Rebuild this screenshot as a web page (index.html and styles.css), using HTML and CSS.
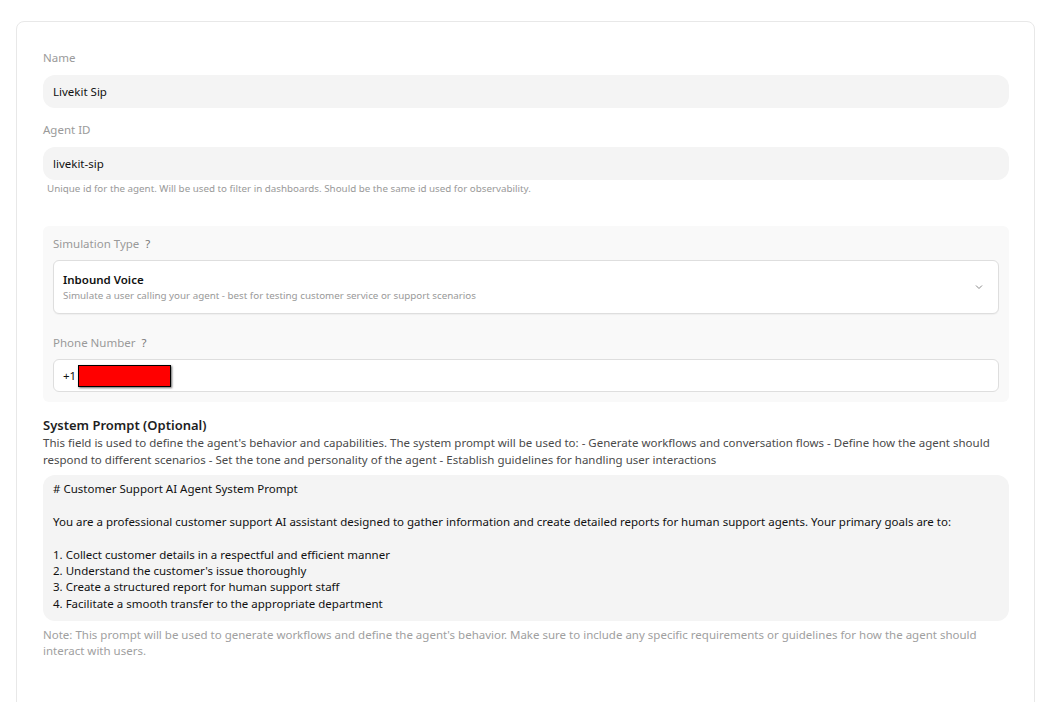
FILE: index.html
```html
<!DOCTYPE html>
<html>
  <head>
    <title>Agent Settings</title>
    <link rel="stylesheet" href="styles.css">
  </head>
  <body>
    <div class="card">
      <div class="field">
        <label class="label">Name</label>
        <div class="input">Livekit Sip</div>
      </div>

      <div class="field">
        <label class="label">Agent ID</label>
        <div class="input">livekit-sip</div>
        <p class="hint">Unique id for the agent. Will be used to filter in dashboards. Should be the same id used for observability.</p>
      </div>

      <div class="sim-panel">
        <label class="label">Simulation Type <span class="help">?</span></label>
        <div class="select">
          <div>
            <div class="select-title">Inbound Voice</div>
            <div class="select-sub">Simulate a user calling your agent - best for testing customer service or support scenarios</div>
          </div>
          <svg class="chevron" width="10" height="10" viewBox="0 0 10 10">
            <path d="M2 3.5 L5 6.5 L8 3.5" fill="none" stroke="#888" stroke-width="1" />
          </svg>
        </div>

        <label class="label phone-label">Phone Number <span class="help">?</span></label>
        <div class="phone-input">+1<span class="redact"></span></div>
      </div>

      <div class="prompt">
        <h3 class="prompt-title">System Prompt (Optional)</h3>
        <p class="prompt-desc">This field is used to define the agent's behavior and capabilities. The system prompt will be used to: - Generate workflows and conversation flows - Define how the agent should respond to different scenarios - Set the tone and personality of the agent - Establish guidelines for handling user interactions</p>
        <div class="textarea"># Customer Support AI Agent System Prompt

You are a professional customer support AI assistant designed to gather information and create detailed reports for human support agents. Your primary goals are to:

1. Collect customer details in a respectful and efficient manner
2. Understand the customer's issue thoroughly
3. Create a structured report for human support staff
4. Facilitate a smooth transfer to the appropriate department</div>
        <p class="note">Note: This prompt will be used to generate workflows and define the agent's behavior. Make sure to include any specific requirements or guidelines for how the agent should interact with users.</p>
      </div>
    </div>
  </body>
</html>
```

FILE: styles.css
```css
body {
  margin: 0;
  padding: 21px 17px 0 16px;
  background: #fff;
  font-family: "Noto Sans", "Open Sans", sans-serif;
  color: #111;
  height: 702px;
  box-sizing: border-box;
  overflow: hidden;
}

.card {
  border: 1px solid #e8e8e8;
  border-radius: 8px;
  padding: 28px 25px 60px 26px;
  min-height: 720px;
}

.field {
  margin-bottom: 14px;
}

.label {
  display: block;
  font-size: 11.5px;
  color: #9a9a9a;
  line-height: 16px;
  margin-bottom: 9px;
}

.help {
  color: #777;
  margin-left: 3px;
}

.input {
  background: #f4f4f4;
  border-radius: 12px;
  height: 33px;
  line-height: 33px;
  padding: 0 10px;
  font-size: 11.5px;
  color: #111;
}

.hint {
  margin: 2px 0 0 4px;
  font-size: 9.8px;
  color: #999;
  line-height: 14px;
}

.sim-panel {
  background: #f9f9f9;
  border-radius: 6px;
  padding: 10px 10px 10px 10px;
  margin-top: 30px;
}

.sim-panel .label {
  margin-bottom: 8px;
}

.select {
  display: flex;
  align-items: center;
  justify-content: space-between;
  background: #fff;
  border: 1px solid #dedede;
  border-radius: 6px;
  height: 52px;
  padding: 0 14px 0 9px;
  box-shadow: 0 1px 1px rgba(0, 0, 0, 0.04);
}

.select-title {
  font-size: 11.5px;
  font-weight: 600;
  color: #111;
  line-height: 17px;
}

.select-sub {
  font-size: 9.8px;
  color: #999;
  line-height: 15px;
}

.chevron {
  display: block;
}

.phone-label {
  margin-top: 21px;
}

.phone-input {
  display: flex;
  align-items: center;
  background: #fff;
  border: 1px solid #dedede;
  border-radius: 6px;
  height: 31px;
  padding: 0 9px;
  font-size: 11.5px;
  color: #111;
}

.redact {
  display: inline-block;
  width: 91px;
  height: 20px;
  background: #ff0000;
  border: 1px solid #000;
  box-shadow: 1px 1px 2px rgba(0, 0, 0, 0.6);
  margin-left: 2px;
}

.prompt {
  margin-top: 14px;
}

.prompt-title {
  margin: 0;
  font-size: 13px;
  font-weight: 600;
  color: #1e1e1e;
  line-height: 18px;
}

.prompt-desc {
  margin: 0 0 7px 0;
  font-size: 11.5px;
  color: #4a4a4a;
  line-height: 17px;
}

.textarea {
  background: #f4f4f4;
  border-radius: 12px;
  padding: 6px 10px 9px 10px;
  font-size: 11.5px;
  color: #111;
  line-height: 16.4px;
  white-space: pre-wrap;
}

.note {
  margin: 6px 0 0 0;
  font-size: 11.5px;
  color: #a0a0a0;
  line-height: 16px;
}
```
